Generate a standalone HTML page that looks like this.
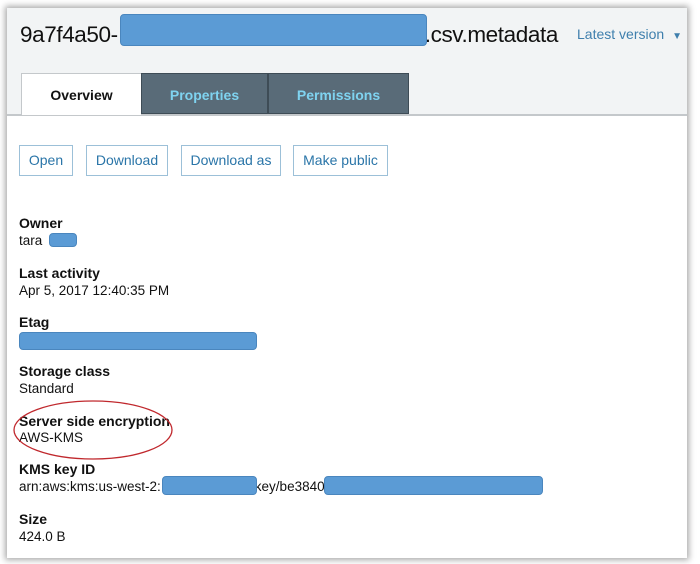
<!DOCTYPE html>
<html><head><style>
body{margin:0;width:700px;height:564px;background:#fff;font-family:"Liberation Sans",Arial,sans-serif;position:relative;overflow:hidden}
.frame{position:absolute;left:7px;top:8px;width:680px;height:550px;background:#fff;box-shadow:0 0 6px 2px #aaa}
.hdr{position:absolute;left:0;top:0;width:680px;height:106px;background:#f2f4f5;border-bottom:2px solid #c4c8cb}
.a{position:absolute}
.title{left:13px;top:14px;font-size:22.5px;color:#111;letter-spacing:-0.4px}
.red{position:absolute;background:#5b9bd5;border:1px solid #4a86be;border-radius:4px}
.tab{position:absolute;top:65px;height:41px;background:#596b78;color:#7fd3f0;font-weight:bold;font-size:14px;text-align:center;line-height:42px;border:1px solid #3e4c56;box-sizing:border-box}
.btn{position:absolute;top:137px;height:31px;border:1px solid #9cc0d8;box-sizing:border-box;color:#2a75a8;font-size:14px;line-height:29px;text-align:center}
.l{position:absolute;left:12px;font-weight:bold;font-size:14px;color:#111}
.v{position:absolute;left:12px;font-size:13.5px;color:#111}
</style></head><body>
<div class="frame">
<div class="hdr"></div>
<div class="a title">9a7f4a50-<span style="display:inline-block;width:307px"></span>.csv.metadata</div>
<div class="red" style="left:113px;top:6px;width:305px;height:30px"></div>
<div class="a" style="left:570px;top:18px;font-size:14px;color:#3f7fad">Latest version <span style="font-size:10px;margin-left:4px">&#9660;</span></div>
<div class="tab" style="left:14px;width:121px;background:#fff;color:#111;border-color:#c4c8cb;border-bottom:none;height:42px">Overview</div>
<div class="tab" style="left:134px;width:127px">Properties</div>
<div class="tab" style="left:261px;width:141px">Permissions</div>
<div class="btn" style="left:12px;width:54px">Open</div>
<div class="btn" style="left:79px;width:82px">Download</div>
<div class="btn" style="left:174px;width:100px">Download as</div>
<div class="btn" style="left:286px;width:95px">Make public</div>
<div class="l" style="top:207px">Owner</div><div class="v" style="top:225px">tara</div>
<div class="red" style="left:42px;top:225px;width:26px;height:12px"></div>
<div class="l" style="top:257px">Last activity</div><div class="v" style="top:275px">Apr 5, 2017 12:40:35 PM</div>
<div class="l" style="top:306px">Etag</div>
<div class="red" style="left:12px;top:324px;width:236px;height:16px"></div>
<div class="l" style="top:355px">Storage class</div><div class="v" style="top:373px">Standard</div>
<div class="l" style="top:405px">Server side encryption</div><div class="v" style="top:422px">AWS-KMS</div>
<svg class="a" style="left:0;top:390px" width="180" height="70"><ellipse cx="86" cy="32" rx="79" ry="29" fill="none" stroke="#c0282d" stroke-width="1.3"/></svg>
<div class="l" style="top:453px">KMS key ID</div><div class="v" style="top:471px">arn:aws:kms:us-west-2:<span style="display:inline-block;width:94px"></span>key/be3840</div>
<div class="red" style="left:155px;top:468px;width:93px;height:17px"></div>
<div class="red" style="left:317px;top:468px;width:217px;height:17px"></div>
<div class="l" style="top:503px">Size</div><div class="v" style="top:521px">424.0 B</div>
</div>
</body></html>
